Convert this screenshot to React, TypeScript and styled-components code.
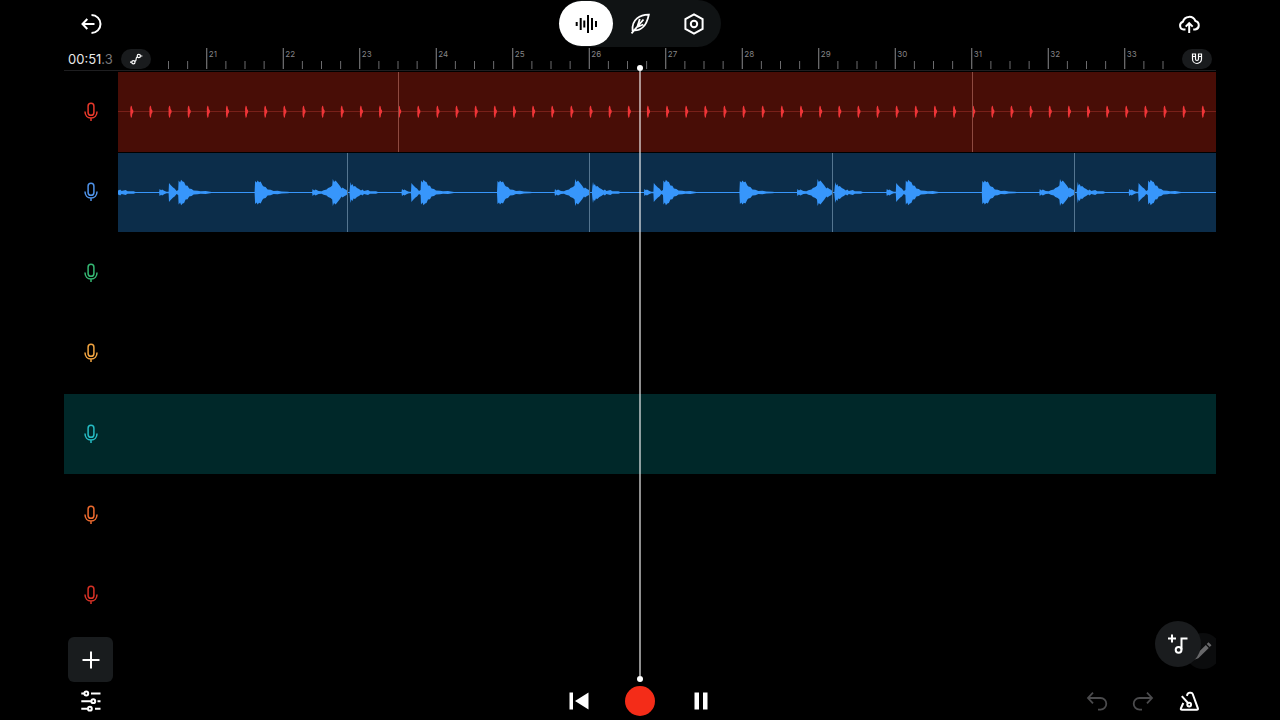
import React from 'react';
import styled, { createGlobalStyle } from 'styled-components';

const GlobalStyle = createGlobalStyle`
  * { box-sizing: border-box; }
  body {
    margin: 0;
    background: #000;
    color: #fff;
    font-family: Inter, "Liberation Sans", sans-serif;
  }
`;

const Page = styled.div`
  position: relative;
  display: flex;
  flex-direction: column;
  min-height: 100vh;
  padding: 0 64px;
  overflow: hidden;
`;

const Header = styled.header`
  display: grid;
  grid-template-columns: 1fr auto 1fr;
  align-items: center;
  height: 47px;
  padding: 0 4px;
`;

const IconButton = styled.button<{ $dim?: boolean }>`
  display: flex;
  align-items: center;
  justify-content: center;
  width: 46px;
  height: 38px;
  padding: 0;
  border: 0;
  background: none;
  color: ${(p) => (p.$dim ? '#4b4b4d' : '#fff')};
`;

const EndIconButton = styled(IconButton)`
  justify-self: end;
`;

const ViewSwitch = styled.nav`
  display: flex;
  align-items: center;
  height: 47px;
  border-radius: 24px;
  background: #101314;
`;

const ViewButton = styled.button<{ $active?: boolean }>`
  display: flex;
  align-items: center;
  justify-content: center;
  width: 54px;
  height: 45px;
  padding: 0;
  border: 0;
  border-radius: 23px;
  background: ${(p) => (p.$active ? '#fff' : 'transparent')};
  color: ${(p) => (p.$active ? '#000' : '#fff')};
`;

const RulerRow = styled.div`
  display: flex;
  align-items: center;
  height: 24px;
  margin-bottom: 1px;
  padding: 0 4px;
  border-bottom: 1px solid #1e1e20;
`;

const Time = styled.time`
  width: 53px;
  font-size: 13px;
  line-height: 20px;
  color: #e8e8e8;
`;

const TimeFraction = styled.span`
  color: #77777a;
`;

const PillButton = styled.button`
  display: flex;
  flex: none;
  align-items: center;
  justify-content: center;
  width: 30px;
  height: 20px;
  padding: 0;
  border: 0;
  border-radius: 10px;
  background: #191b1d;
  color: #fff;
`;

const RulerScale = styled.svg`
  flex: 1;
  min-width: 0;
  height: 23px;
  font-family: Inter, "Liberation Sans", sans-serif;
  font-size: 8px;
`;

const TrackList = styled.ul`
  display: grid;
  flex: 1;
  grid-auto-rows: 1fr;
  gap: 1px;
  margin: 0;
  padding: 0;
  list-style: none;
`;

const Track = styled.li<{ $selected?: boolean }>`
  display: flex;
  min-width: 0;
  background: ${(p) => (p.$selected ? '#002829' : 'transparent')};
`;

const TrackButton = styled.button<{ $color: string }>`
  display: flex;
  flex: none;
  align-items: center;
  justify-content: center;
  width: 54px;
  padding: 0;
  border: 0;
  background: none;
  color: ${(p) => p.$color};
`;

const Clip = styled.div<{ $fill: string }>`
  display: flex;
  flex: 1;
  align-items: center;
  min-width: 0;
  overflow: hidden;
  background: ${(p) => p.$fill};
`;

const Wave = styled.svg`
  width: 100%;
  height: 79px;
  overflow: visible;
`;

const Footer = styled.footer`
  display: flex;
  flex-direction: column;
  padding: 2px 4px 0;
`;

const Tools = styled.div`
  display: flex;
  justify-content: space-between;
  height: 45px;
`;

const AddTrack = styled.button`
  display: flex;
  align-items: center;
  justify-content: center;
  width: 45px;
  height: 45px;
  padding: 0;
  border: 0;
  border-radius: 6px;
  background: #191c1e;
  color: #fff;
`;

const Floating = styled.div`
  position: absolute;
  right: 64px;
  bottom: 49px;
  width: 61px;
  height: 50px;
  overflow: hidden;
`;

const RoundButton = styled.button`
  position: absolute;
  top: 0;
  left: 0;
  display: flex;
  align-items: center;
  justify-content: center;
  width: 46px;
  height: 46px;
  padding: 0;
  border: 0;
  border-radius: 50%;
  background: #1a1c1e;
  color: #fff;
`;

const EditButton = styled(RoundButton)`
  top: 12px;
  left: 30px;
  width: 36px;
  height: 36px;
  background: #0b0c0d;
  color: #68686a;
`;

const Transport = styled.div`
  display: grid;
  grid-template-columns: 1fr auto 1fr;
  align-items: center;
  height: 38px;
`;

const Playback = styled.div`
  display: flex;
  align-items: center;
  gap: 23px;
`;

const History = styled.div`
  display: flex;
  justify-content: flex-end;
`;

const Record = styled.button`
  width: 30px;
  height: 30px;
  padding: 0;
  border: 0;
  border-radius: 50%;
  background: #f42c18;
`;

const Playhead = styled.div`
  position: absolute;
  top: 65px;
  bottom: 38px;
  left: 50%;
  display: flex;
  flex-direction: column;
  align-items: center;
  width: 6px;
  margin-left: -3px;
  pointer-events: none;
`;

const PlayheadDot = styled.span`
  width: 6px;
  height: 6px;
  border-radius: 50%;
  background: #fff;
`;

const PlayheadLine = styled.span`
  flex: 1;
  width: 2px;
  background: rgba(255, 255, 255, 0.56);
`;

type IconProps = {
  children: React.ReactNode;
  size?: number;
  weight?: number;
};

const Icon = ({ children, size = 24, weight = 2 }: IconProps) => (
  <svg
    width={size}
    height={size}
    viewBox={`0 0 ${size} ${size}`}
    fill="none"
    stroke="currentColor"
    strokeWidth={weight}
    aria-hidden="true"
  >
    {children}
  </svg>
);

const Mic = () => (
  <Icon weight={1.5}>
    <rect x="9.1" y="3.3" width="5.8" height="12" rx="2.9" />
    <path d="M6 11.5c0 4 2.4 6.6 6 6.6s6-2.6 6-6.6M12 18v3" />
  </Icon>
);

const BEAT = 19.125;
const BEATS_SHOWN = 53;
const FIRST_BAR = 21;

const Ruler = () => (
  <RulerScale aria-label="Bars">
    {Array.from({ length: BEATS_SHOWN }, (_, i) => {
      const x = 17.5 + i * BEAT;
      const major = i % 4 === 2;
      return (
        <g key={i}>
          <line
            x1={x}
            x2={x}
            y1={major ? 1 : 14}
            y2={22}
            stroke={major ? '#8b8b8d' : '#6c6c6e'}
          />
          {major && (
            <text x={x + 2} y={10} fill="#858587">
              {FIRST_BAR + (i - 2) / 4}
            </text>
          )}
        </g>
      );
    })}
  </RulerScale>
);

const CLICKS = Array.from({ length: 150 }, (_, i) => 12.3 + i * 19.135);

const ClickWave = () => (
  <Wave aria-label="Click audio">
    <rect x="0" y="39" width="100%" height="1" fill="#782019" />
    {CLICKS.map((x) => (
      <path
        key={x}
        d={`M${x} 36L${x + 0.7} 33.5L${x + 1.6} 34.5L${x + 2} 37L${x + 3} 38.5V40.5L${x + 2} 42L${x + 1.6} 45L${x + 0.7} 46L${x} 43Z`}
        fill="#f03538"
      />
    ))}
    {[280.5, 854.5, 1428.5, 2002.5].map((x) => (
      <line key={x} x1={x} x2={x} y1="-1" y2="80" stroke="#8e4a40" />
    ))}
  </Wave>
);

// Envelope of one loop: [offset from loop start, amplitude]
const LOOP: [number, number][] = [
  [0, 0.5], [1.5, 0.5], [2, 6], [2.6, 10.5], [3.4, 7], [4.5, 8.5], [5.5, 6], [7, 6.5], [9, 4.5],
  [11, 3.5], [13, 2], [14.5, 3], [16, 1.6], [20, 2.4], [22, 1.3], [28, 1.2], [30, 0.5],
  [53.5, 0.5], [54, 3.5], [55.5, 2.2], [56.5, 3], [59, 1.4], [61, 0.7], [63, 0.8],
  [63.4, 9.5], [65, 7.5], [66, 6.5], [67.5, 5], [69, 4], [71, 1.6], [72.6, 2.6],
  [73, 12], [74.5, 10], [75.5, 12.8], [77, 11], [78.5, 10.5], [80, 7], [82, 6.8], [83.5, 4],
  [86, 3.6], [88, 2], [92, 1.8], [95, 1.2], [100, 1.4], [106, 0.5],
  [149, 0.5], [149.5, 11.5], [151, 10], [152, 12], [153.5, 10.2], [155, 11], [157, 7], [158, 6],
  [160, 5.5], [162, 3], [165, 2.8], [168, 1.6], [172, 1.7], [176, 1], [182, 0.8], [184, 0.5],
  [206.5, 0.5], [207, 3.4], [208.5, 2], [210, 3], [213, 1.5], [216, 1.2], [218, 2.2], [221, 3],
  [222.5, 4.6], [225, 5.5], [226.6, 7], [227.2, 13.5], [228.4, 10.5], [230, 12], [232, 9.5],
  [234, 7], [236, 4], [237, 5], [239, 3.5], [241, 2.5], [242.2, 0.5],
];

const LOOP_LENGTH = 242.4;
const LOOP_STARTS = Array.from({ length: 12 }, (_, i) => -12.4 + i * LOOP_LENGTH);

const loopPath = (start: number) => {
  const upper = LOOP.map(([x, a]) => `${(start + x).toFixed(1)} ${(39.5 - a).toFixed(1)}`);
  const lower = [...LOOP].reverse().map(([x, a]) => `${(start + x).toFixed(1)} ${(39.5 + a).toFixed(1)}`);
  return `M${[...upper, ...lower].join('L')}Z`;
};

const DrumWave = () => (
  <Wave aria-label="Drum audio">
    <rect x="0" y="39" width="100%" height="1" fill="#2f84dd" />
    {LOOP_STARTS.map((x) => (
      <path key={x} d={loopPath(x)} fill="#3796fb" />
    ))}
    {LOOP_STARTS.slice(1).map((x) => (
      <line key={x} x1={Math.floor(x - 0.6) + 0.5} x2={Math.floor(x - 0.6) + 0.5} y1="-1" y2="80" stroke="#557590" />
    ))}
  </Wave>
);

type TrackData = {
  name: string;
  color: string;
  fill?: string;
  wave?: React.ReactNode;
  selected?: boolean;
};

const TRACKS: TrackData[] = [
  { name: 'Track 1', color: '#e8392b', fill: '#480d06', wave: <ClickWave /> },
  { name: 'Track 2', color: '#4f93ea', fill: '#0c2d4a', wave: <DrumWave /> },
  { name: 'Track 3', color: '#35b873' },
  { name: 'Track 4', color: '#f2a541' },
  { name: 'Track 5', color: '#25bcc4', selected: true },
  { name: 'Track 6', color: '#ee6b2f' },
  { name: 'Track 7', color: '#d93226' },
];

export default function App() {
  return (
    <Page>
      <GlobalStyle />
      <Header>
        <IconButton aria-label="Leave">
          <Icon>
            <path d="M12.500 3a9 9 0 0 1 0 18M15.500 12H3.500M8.300 7L3.500 12l4.800 5" />
          </Icon>
        </IconButton>
        <ViewSwitch aria-label="Views">
          <ViewButton $active aria-label="Tracks">
            <Icon>
              <path d="M2.7 10v4M6.7 6v12M10.3 8.5v7M14 3v18M18 6v12M22 9v6" />
            </Icon>
          </ViewButton>
          <ViewButton aria-label="Lyrics">
            <Icon weight={1.8}>
              <path d="M20.800 2.700C12 2.600 3.600 7.500 4.600 18.300C12.500 19.500 18.500 14 20.800 2.700ZM3.500 21.300L15.500 7.500M11.800 7L9.300 15L15.300 12.500" />
            </Icon>
          </ViewButton>
          <ViewButton aria-label="Settings">
            <Icon>
              <path d="M12 2.3L20.6 7.2V16.8L12 21.7L3.4 16.8V7.2Z" />
              <circle cx="12" cy="12" r="3.2" />
            </Icon>
          </ViewButton>
        </ViewSwitch>
        <EndIconButton aria-label="Save">
          <Icon>
            <path d="M8.5 17.6H6.6a4 4 0 0 1-.7-7.8A6.6 6.6 0 0 1 18.4 9a4.4 4.4 0 0 1-.2 8.6h-2M12.2 21v-9.500M8.700 14.600l3.500-3.500 3.500 3.500" />
          </Icon>
        </EndIconButton>
      </Header>

      <RulerRow>
        <Time>
          00:51<TimeFraction>.3</TimeFraction>
        </Time>
        <PillButton aria-label="Automation">
          <Icon size={16} weight={1.2}>
            <circle cx="5.4" cy="11.2" r="1.6" />
            <circle cx="10.8" cy="5" r="1.6" />
            <path d="M2 11.200h1.800M6.800 10.500C9.500 9.500 6.800 6.500 9.400 5.700M12.400 5h2" />
          </Icon>
        </PillButton>
        <Ruler />
        <PillButton aria-label="Snap to grid">
          <Icon size={16} weight={1.2}>
            <path d="M3.500 3h3v5a1.500 1.500 0 0 0 3 0V3h3v5a4.500 4.500 0 0 1-9 0ZM3.500 5.500h3M9.500 5.500h3" />
          </Icon>
        </PillButton>
      </RulerRow>

      <TrackList>
        {TRACKS.map((t) => (
          <Track key={t.name} $selected={t.selected}>
            <TrackButton $color={t.color} aria-label={t.name}>
              <Mic />
            </TrackButton>
            {t.fill && <Clip $fill={t.fill}>{t.wave}</Clip>}
          </Track>
        ))}
      </TrackList>

      <Footer>
        <Tools>
          <AddTrack aria-label="Add track">
            <Icon>
              <path d="M12 3.500v17M3.500 12h17" />
            </Icon>
          </AddTrack>
        </Tools>
        <Transport>
          <IconButton aria-label="Mixer">
            <Icon>
              <circle cx="7.300" cy="4.500" r="1.900" />
              <circle cx="14.300" cy="12.200" r="1.900" />
              <circle cx="10.900" cy="19.700" r="1.900" />
              <path d="M2.300 4.500h3M12 4.500h9.500M2.300 12.200h10M18.500 12.200h3M2.300 19.700h6.600M16 19.700h5.500" />
            </Icon>
          </IconButton>
          <Playback>
            <IconButton aria-label="Back to start">
              <Icon>
                <path d="M2.500 3.500H6V20.500H2.500ZM21.500 3.500V20.500L8 12Z" fill="currentColor" stroke="none" />
              </Icon>
            </IconButton>
            <Record aria-label="Record" />
            <IconButton aria-label="Pause">
              <Icon>
                <path d="M5.500 3.500H10V20.500H5.500ZM14 3.500H18.500V20.500H14Z" fill="currentColor" stroke="none" />
              </Icon>
            </IconButton>
          </Playback>
          <History>
            <IconButton $dim aria-label="Undo">
              <Icon weight={1.8}>
                <path d="M8 3.700L3 9l5 5.300M3 9h12.500a5.800 5.800 0 0 1 0 11.600H13" />
              </Icon>
            </IconButton>
            <IconButton $dim aria-label="Redo">
              <Icon weight={1.8}>
                <path d="M16 3.700L21 9l-5 5.300M21 9H8.500a5.800 5.800 0 0 0 0 11.600H11" />
              </Icon>
            </IconButton>
            <IconButton aria-label="Metronome">
              <Icon>
                <path d="M6.300 14L3.900 19.300Q3.400 20.800 5 20.800H19.800Q21.300 20.800 20.900 19.300L15.700 5Q15.200 3.700 13.900 3.700H12.500Q11.200 3.700 10.600 5L9.800 6.800M4.800 7.200L11 14" />
                <circle cx="12.200" cy="15.600" r="1.900" />
              </Icon>
            </IconButton>
          </History>
        </Transport>
      </Footer>

      <Floating>
        <EditButton aria-label="Edit">
          <Icon>
            <path d="M2.500 21L4.500 16.200L14.800 5.900L17.800 8.900L7.300 19.200ZM15.700 5L17.500 3.200L20.500 6.200L18.700 8Z" fill="currentColor" stroke="none" />
          </Icon>
        </EditButton>
        <RoundButton aria-label="Add loop">
          <Icon>
            <path d="M6 2.500v8M2 6.500h8M21.500 6.500H15.500V17.500" />
            <circle cx="12.600" cy="17.800" r="2.900" />
          </Icon>
        </RoundButton>
      </Floating>

      <Playhead>
        <PlayheadDot />
        <PlayheadLine />
        <PlayheadDot />
      </Playhead>
    </Page>
  );
}
